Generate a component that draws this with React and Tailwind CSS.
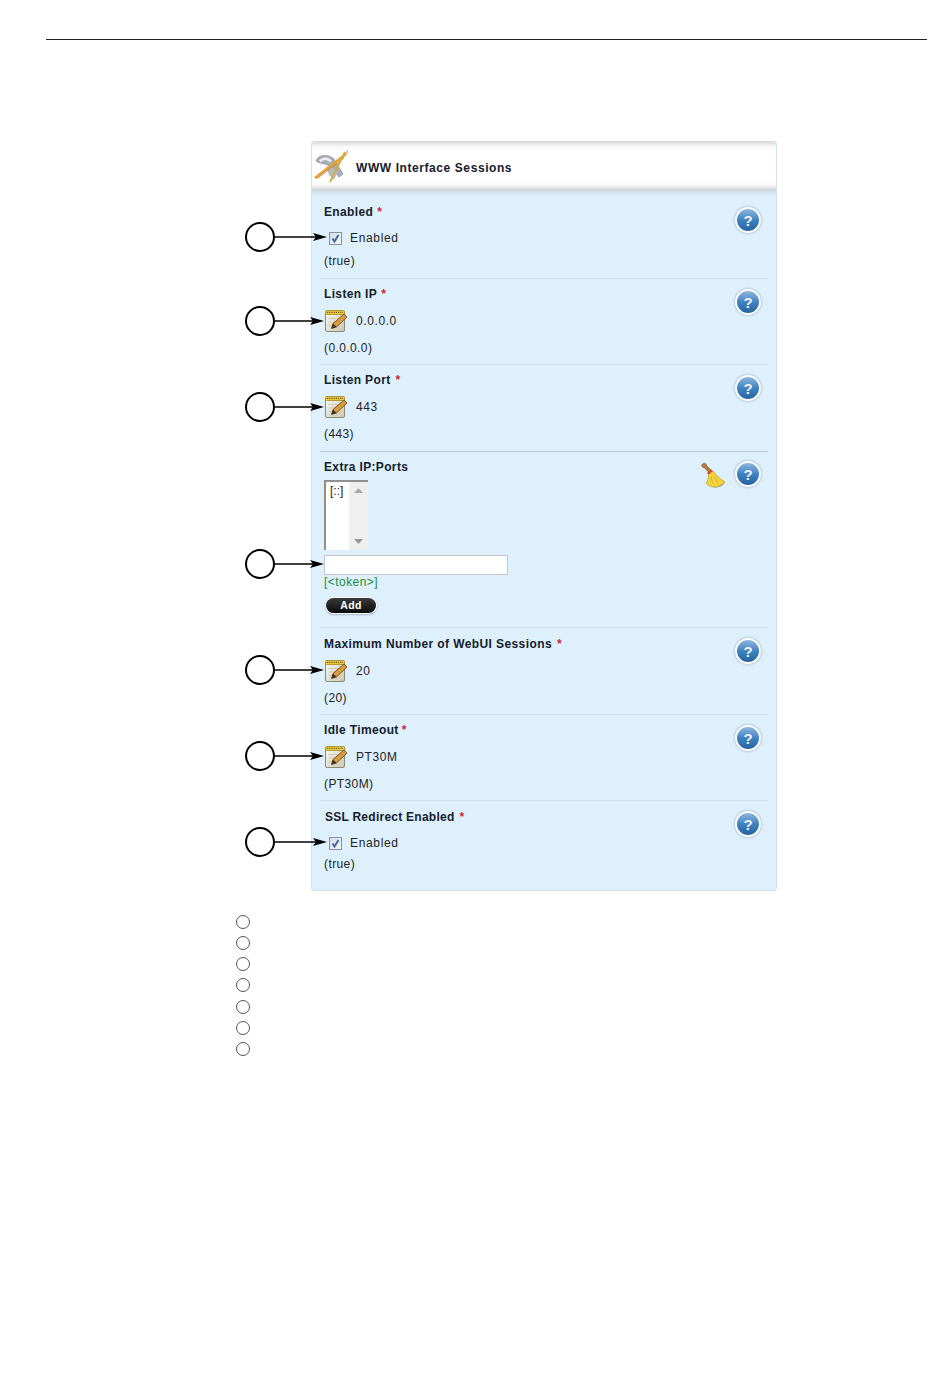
import React from "react";

const NoteIcon = () => (
  <svg width="24" height="24" viewBox="0 0 24 24" className="shrink-0">
    <defs>
      <linearGradient id="pg" x1="0" y1="0" x2="1" y2="1">
        <stop offset="0" stopColor="#fbfaf0" />
        <stop offset="1" stopColor="#c9c6b4" />
      </linearGradient>
    </defs>
    <rect x="1.5" y="2.5" width="19" height="20" rx="1.5" fill="url(#pg)" stroke="#8d8a72" strokeWidth="1" />
    <rect x="1.5" y="1.5" width="19" height="4" rx="1" fill="#efca3f" stroke="#a88a1e" strokeWidth="0.8" />
    <path d="M3 3.3h16" stroke="#6f6220" strokeWidth="1.2" strokeDasharray="1.2 1" />
    <path d="M4.5 9.5h11M4.5 13h8M4.5 16.5h5" stroke="#cdcab4" strokeWidth="1" />
    <path d="M7.5 19.5 L9 14.5 L20 5 L23 8 L12.5 18 Z" fill="#d99a3c" stroke="#5f421a" strokeWidth="0.8" />
    <path d="M7.5 19.5 L9 14.5 L12.5 18 Z" fill="#3a2f20" />
  </svg>
);

const ToolIcon = () => (
  <svg width="34" height="34" viewBox="0 0 34 34" className="shrink-0">
    <path d="M2 12 C4 5 15 5 20 10 L29 25 L25 28 L16 17 C11 14 6 15 2 12 Z" fill="#a9afb6" stroke="#8f959c" strokeWidth="0.8" />
    <path d="M6 12.5 C9 8.5 14 9 17 12.5" fill="none" stroke="#eef0f2" strokeWidth="2.5" />
    <path d="M12 17 L24 22 L20 31 L15 26 Z" fill="#b7bcc2" />
    <path d="M1 29 L32 5" stroke="#e8a12f" strokeWidth="2.6" />
    <path d="M3 29.5 L30 9" stroke="#c47a26" strokeWidth="0.9" />
    <path d="M16 33 L31 3" stroke="#cfae45" strokeWidth="2" />
    <path d="M32 5 L34 1" stroke="#d8b56a" strokeWidth="1.6" />
  </svg>
);

const Broom = () => (
  <svg width="26" height="28" viewBox="0 0 26 28" className="shrink-0">
    <path d="M2.5 3 C1 4.5 2 6.5 4 6.5 L9 11.5 L11.5 9.5 L6.5 4.5 C6.5 2 4 1.5 2.5 3 Z" fill="#b77a3a" stroke="#7e5122" strokeWidth="0.6" />
    <path d="M7 12 L11.5 8.5 L12.8 10 L8.5 13.8 Z" fill="#d8402c" />
    <path d="M8.5 14 L13 10 C16 14 20 18 25 21 C22 23 20 25.5 15 26 C11 26 7 24 6 22 C8 20 8.5 17 8.5 14 Z" fill="#f2d53a" stroke="#b9982a" strokeWidth="0.7" />
    <path d="M11 16 L13 23 M14 15 L18 23" stroke="#d0a92a" strokeWidth="0.8" />
    <path d="M6 22 C9 25 12 26 15 26 C18 26 22 24 25 21 L23 24 C20 27 12 28 6 22 Z" fill="#a9a27a" />
  </svg>
);

const Help = () => (
  <div className="w-[26px] h-[26px] rounded-full bg-white shadow-[0_0_3px_rgba(110,130,150,0.7)] flex items-center justify-center shrink-0">
    <div className="w-[22px] h-[22px] rounded-full bg-gradient-to-b from-[#8fb7dd] via-[#3f83c2] to-[#24649f] flex items-center justify-center text-[#eef5fb] font-bold text-[15px] leading-none">
      ?
    </div>
  </div>
);

const Callout = ({ len, left = "left-[-79px]", up = true }) => (
  <div className={`absolute ${left} ${up ? "top-[calc(50%-1px)]" : "top-1/2"} -translate-y-1/2 flex items-center`}>
    <div className="w-[30px] h-[30px] rounded-full border-2 border-black bg-white shrink-0" />
    <svg width={len} height="12" viewBox={`0 0 ${len} 12`} className="shrink-0">
      <path d={`M0 6H${len - 6}`} stroke="#000" strokeWidth="1.6" />
      <path d={`M${len} 6 L${len - 14} 2 L${len - 11} 6 L${len - 14} 10 Z`} fill="#000" />
    </svg>
  </div>
);

const Label = ({ text, req, star = "ml-[5px]", indent = "", track = "tracking-[0.35px]" }) => (
  <div className={`h-4 leading-4 font-bold text-[12px] ${track} text-[#15202b] whitespace-nowrap ${indent}`}>
    {text}
    {req && <span className={`text-[#d0263a] ${star}`}>*</span>}
  </div>
);

const Value = ({ children, cls }) => (
  <div className={`h-4 leading-4 text-[12px] tracking-[0.4px] text-[#222] ${cls}`}>{children}</div>
);

const Check = () => (
  <div className="relative flex items-center h-5 mt-[8px]">
    <Callout len={52} />
    <div className="ml-[5px] w-[13px] h-[13px] border border-[#85929f] bg-gradient-to-br from-[#d5dde6] to-[#f6f8fb] flex items-center justify-center">
      <svg width="9" height="9" viewBox="0 0 9 9">
        <path d="M1.5 4.5 L3.5 7.5 L7.5 1" fill="none" stroke="#46689c" strokeWidth="2" />
      </svg>
    </div>
    <span className="ml-[8px] text-[12px] tracking-[0.65px] text-[#222]">Enabled</span>
  </div>
);

const Edit = ({ value, up = true }) => (
  <div className="relative flex items-center h-6 mt-[7px]">
    <Callout len={49} up={up} />
    <NoteIcon />
    <span className="ml-[8px] text-[12px] tracking-[0.6px] text-[#222]">{value}</span>
  </div>
);

const Row = ({ h, border = "border-[#cfdde8]", help = "mt-[15px]", children, right }) => (
  <div className={`flex justify-between pl-[4px] pr-[7px] border-b ${border} ${h}`}>
    <div className="flex flex-col">{children}</div>
    <div className={`flex items-start ${help}`}>
      {right}
      <Help />
    </div>
  </div>
);

const Steps = () => (
  <div className="ml-[236px] mt-[24px] flex flex-col gap-[7.15px]">
    {[0, 1, 2, 3, 4, 5, 6].map((i) => (
      <div key={i} className="w-[14px] h-[14px] rounded-full border border-[#555]" />
    ))}
  </div>
);

export default function App() {
  return (
    <div className="w-[950px] h-[1387px] bg-white font-['Liberation_Sans',Arial,sans-serif] overflow-hidden pt-[39px]">
      <div className="ml-[46px] w-[881px] h-px bg-[#222]" />
      <div className="ml-[311px] mt-[101px] w-[466px] h-[750px] rounded-[4px] bg-[#dff0fd] px-[8px] border-x border-b border-[#d3e0ea] flex flex-col">
        <div className="-mx-[8px] h-[49px] shrink-0 rounded-t-[4px] bg-[linear-gradient(to_bottom,#d4d4d4_0px,#fafafa_6px,#ffffff_10px,#ffffff_41px,#f4f4f4_45px,#d2d2d2_49px)] flex items-center pl-[2px] relative">
          <ToolIcon />
          <span className="ml-[8px] mt-[5px] font-bold text-[12px] tracking-[0.58px] text-[#15202b]">WWW Interface Sessions</span>
          <div className="absolute left-0 right-0 top-[100%] h-[6px] bg-gradient-to-b from-[#cdd8e1] to-transparent" />
        </div>

        <Row h="h-[89px] shrink-0" help="mt-[17px]">
          <div className="pt-[14px]"><Label text="Enabled" req star="ml-[4px]" /></div>
          <Check />
          <Value cls="mt-[5px]">(true)</Value>
        </Row>

        <Row h="h-[86px] shrink-0" help="mt-[10px]">
          <div className="pt-[7px]"><Label text="Listen IP" req star="ml-[4px]" /></div>
          <Edit value="0.0.0.0" up={false} />
          <Value cls="mt-[7px]">(0.0.0.0)</Value>
        </Row>

        <Row h="h-[87px] shrink-0" border="border-[#bdccd8]" help="mt-[10px]">
          <div className="pt-[7px]"><Label text="Listen Port" req /></div>
          <Edit value="443" up={false} />
          <Value cls="mt-[7px]">(443)</Value>
        </Row>

        <Row
          h="h-[176px] shrink-0"
          help="mt-[9px]"
          right={<div className="mr-[9px]"><Broom /></div>}
        >
          <div className="pt-[7px]"><Label text="Extra IP:Ports" /></div>
          <div className="mt-[5px] w-[44px] h-[70px] border-l-2 border-t-2 border-[#8f8f8f] bg-white flex">
            <div className="w-[23px] text-[12px] pl-[4px] pt-[1px] leading-4 text-[#222]">[::]</div>
            <div className="flex-1 bg-[#efefef] flex flex-col items-center justify-between py-[6px]">
              <svg width="9" height="5" viewBox="0 0 9 5"><path d="M4.5 0 L9 5 H0 Z" fill="#a8a8a8" /></svg>
              <svg width="9" height="5" viewBox="0 0 9 5"><path d="M4.5 5 L9 0 H0 Z" fill="#989898" /></svg>
            </div>
          </div>
          <div className="relative mt-[5px] w-[184px] h-[20px] bg-white border border-[#c6c6c6]">
            <Callout len={49} left="left-[-80px]" />
          </div>
          <div className="h-4 leading-4 mt-[-1px] text-[12px] tracking-[0.45px] text-[#1f8a3a]">[&lt;token&gt;]</div>
          <div className="ml-[2px] mt-[8px] w-[50px] h-[15px] rounded-full bg-gradient-to-b from-[#3a3a3a] to-[#0c0c0c] shadow-[0_0_0_1px_#fff,0_1px_2px_1px_rgba(120,140,160,0.6)] flex items-center justify-center text-white font-bold text-[10.5px] leading-none tracking-[0.3px]">
            Add
          </div>
        </Row>

        <Row h="h-[87px] shrink-0" help="mt-[10px]">
          <div className="pt-[8px]"><Label text="Maximum Number of WebUI Sessions" req star="ml-[5px]" track="tracking-[0.4px]" /></div>
          <Edit value="20" />
          <Value cls="mt-[7px]">(20)</Value>
        </Row>

        <Row h="h-[86px] shrink-0" help="mt-[10px]">
          <div className="pt-[7px]"><Label text="Idle Timeout" req star="ml-[3px]" /></div>
          <Edit value="PT30M" />
          <Value cls="mt-[7px]">(PT30M)</Value>
        </Row>

        <div className="flex justify-between pl-[4px] pr-[7px] flex-1">
          <div className="flex flex-col">
            <div className="pt-[8px]"><Label text="SSL Redirect Enabled" req indent="pl-px" track="tracking-[0.25px]" /></div>
            <Check />
            <Value cls="mt-[3px]">(true)</Value>
          </div>
          <div className="flex items-start mt-[10px]"><Help /></div>
        </div>
      </div>
      <Steps />
    </div>
  );
}
